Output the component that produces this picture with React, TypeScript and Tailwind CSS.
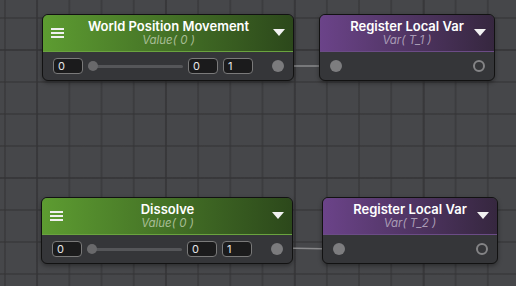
import React from "react";

type NodeProps = {
    x: number;
    y: number;
    title: string;
    sub: string;
    kind: "value" | "register";
};

const Triangle = () => (
    <svg width="12" height="8" viewBox="0 0 12 8" className="shrink-0">
        <path d="M0 0 L12 0 L6 7 Z" fill="#f2f2f2" />
    </svg>
);

const Hamburger = () => (
    <svg width="13" height="10" viewBox="0 0 13 10" className="shrink-0">
        <rect x="0" y="0" width="13" height="2" fill="#f0f0f0" />
        <rect x="0" y="4" width="13" height="2" fill="#f0f0f0" />
        <rect x="0" y="8" width="13" height="2" fill="#f0f0f0" />
    </svg>
);

const Field = ({ value }: { value: string }) => (
    <div className="h-[16px] w-[30px] rounded-[4px] border border-[#7a7a7a] bg-[#1b1b1c] pl-[4px] text-[11px] leading-[14px] text-[#e6e6e6]">
        {value}
    </div>
);

const GraphNode = ({ x, y, title, sub, kind }: NodeProps) => {
    const isValue = kind === "value";
    return (
        <div
            className={`absolute flex flex-col overflow-hidden rounded-[6px] border border-[#121212] bg-[#353639] shadow-[0_2px_4px_rgba(0,0,0,0.35)] ${isValue ? "w-[252px]" : "w-[176px]"}`}
            style={{ left: x, top: y }}
        >
            {isValue ? (
                <div className="flex h-[37px] items-center border-b border-[#6aa33f] bg-[linear-gradient(to_right,#5d9c31,#2c481b)] px-[8px]">
                    <Hamburger />
                    <div className="flex flex-1 flex-col items-center">
                        <span className="text-[13px] font-semibold leading-[15px] text-white">{title}</span>
                        <span className="text-[11.5px] italic leading-[13px] text-[#a7bd95]">{sub}</span>
                    </div>
                    <Triangle />
                </div>
            ) : (
                <div className="flex h-[37px] items-center border-b border-[#6b4c86] bg-[linear-gradient(to_right,#6b4389,#36273f)] px-[8px]">
                    <div className="w-[12px]" />
                    <div className="flex flex-1 flex-col items-center">
                        <span className="text-[13px] font-semibold leading-[15px] text-white">{title}</span>
                        <span className="text-[11.5px] italic leading-[13px] text-[#a99bb5]">{sub}</span>
                    </div>
                    <Triangle />
                </div>
            )}
            {isValue ? (
                <div className="flex h-[28px] items-center pl-[10px] pr-[9px]">
                    <Field value="0" />
                    <div className="relative ml-[5px] flex h-[10px] w-[95px] items-center">
                        <div className="h-[3px] w-full rounded-full bg-[#555659]" />
                        <div className="absolute left-0 top-0 h-[10px] w-[10px] rounded-full bg-[#69696b]" />
                    </div>
                    <div className="ml-[5px]">
                        <Field value="0" />
                    </div>
                    <div className="ml-[5px]">
                        <Field value="1" />
                    </div>
                    <div className="flex-1" />
                    <div className="h-[12px] w-[12px] rounded-full bg-[#7b7b7d]" />
                </div>
            ) : (
                <div className="flex h-[28px] items-center justify-between pl-[10px] pr-[9px]">
                    <div className="h-[12px] w-[12px] rounded-full bg-[#7d7d7f]" />
                    <div className="h-[12px] w-[12px] rounded-full border-2 border-[#848486]" />
                </div>
            )}
        </div>
    );
};

export default function App() {
    return (
        <div
            className="relative h-[286px] w-[516px] overflow-hidden bg-[#46474a] bg-[linear-gradient(to_right,rgba(52,52,54,0.55)_2px,transparent_2px),linear-gradient(to_bottom,rgba(52,52,54,0.55)_2px,transparent_2px),linear-gradient(to_right,rgba(52,52,54,0.5)_2px,transparent_2px),linear-gradient(to_bottom,rgba(52,52,54,0.5)_2px,transparent_2px)] bg-[size:32.2px_32px,32.2px_32px,129px_128px,129px_128px] bg-[position:4px_17px,4px_17px,36px_49px,36px_49px]"
            style={{ fontFamily: "Inter, 'Liberation Sans', sans-serif" }}
        >
            <svg className="absolute left-0 top-0" width="516" height="286">
                <line x1="283" y1="66" x2="332" y2="66" stroke="#8a8a8c" strokeWidth="1.5" />
                <line x1="282" y1="248" x2="335" y2="249" stroke="#8a8a8c" strokeWidth="1.5" />
            </svg>
            <GraphNode x={42} y={14} title="World Position Movement" sub="Value( 0 )" kind="value" />
            <GraphNode x={319} y={14} title="Register Local Var" sub="Var( T_1 )" kind="register" />
            <GraphNode x={41} y={197} title="Dissolve" sub="Value( 0 )" kind="value" />
            <GraphNode x={322} y={197} title="Register Local Var" sub="Var( T_2 )" kind="register" />
        </div>
    );
}
